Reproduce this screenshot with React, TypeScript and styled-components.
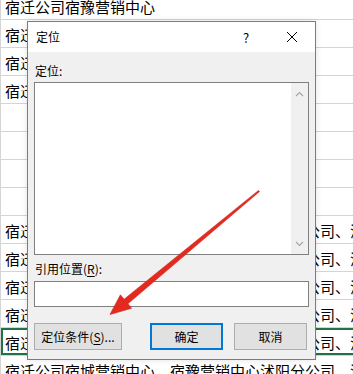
import styled, { createGlobalStyle } from "styled-components";

const GlobalStyle = createGlobalStyle`
    html, body {
        margin: 0;
        padding: 0;
        background: #ffffff;
        overflow: hidden;
    }
    body {
        font-family: "Noto Sans CJK SC", "Noto Sans", sans-serif;
    }
`;

const Page = styled.div`
    position: relative;
    width: 353px;
    height: 374px;
    overflow: hidden;
    background: #ffffff;
`;

const Sheet = styled.div`
    width: 380px;
    margin-top: -8px;
    border-left: 1px solid #d4d4d4;
`;

const Row = styled.div<{ $selected?: boolean }>`
    box-sizing: border-box;
    height: 28px;
    display: flex;
    align-items: flex-end;
    padding: 0 0 2px 4px;
    border-bottom: 1px solid #d4d4d4;
    font-size: 15px;
    line-height: 20px;
    color: #000000;
    white-space: nowrap;
    overflow: hidden;
    box-shadow: ${(props) => (props.$selected ? "inset 0 0 0 2px #217346" : "none")};
`;

const Dialog = styled.div`
    position: absolute;
    left: 27px;
    top: 21px;
    width: 289px;
    box-sizing: border-box;
    border: 1px solid #7c7c7c;
    background: #f0f0f0;
    display: flex;
    flex-direction: column;
    font-size: 12px;
    color: #000000;
    box-shadow: 0 0 6px rgba(0, 0, 0, 0.12);
`;

const TitleBar = styled.div`
    height: 30px;
    display: flex;
    align-items: center;
    background: #ffffff;
    padding-left: 8px;
`;

const Title = styled.div`
    flex: 1;
    line-height: 16px;
`;

const TitleButton = styled.div`
    width: 46px;
    height: 30px;
    display: flex;
    align-items: center;
    justify-content: center;
    font-size: 13px;
`;

const Body = styled.div`
    display: flex;
    flex-direction: column;
    padding: 11px 6px 9px 6px;
`;

const Label = styled.div<{ $gap: number }>`
    line-height: 16px;
    height: 16px;
    margin-bottom: ${(props) => props.$gap}px;
    padding-left: 1px;

    u {
        text-underline-offset: 2px;
    }
`;

const ListBox = styled.div`
    box-sizing: border-box;
    height: 173px;
    margin-bottom: 6px;
    border: 1px solid #7f7f7f;
    background: #ffffff;
    display: flex;
    justify-content: flex-end;
`;

const ScrollTrack = styled.div`
    width: 17px;
    background: #f0f0f0;
    display: flex;
    flex-direction: column;
    justify-content: space-between;
    align-items: center;
    padding: 8px 0 7px;
`;

const Input = styled.div`
    box-sizing: border-box;
    height: 26px;
    margin-bottom: 16px;
    border: 1px solid #7f7f7f;
    background: #ffffff;
`;

const ButtonRow = styled.div`
    display: flex;
    justify-content: space-between;
    padding-right: 2px;
`;

const ButtonGroup = styled.div`
    display: flex;
    gap: 11px;
`;

const Button = styled.div<{ $width: number; $default?: boolean }>`
    box-sizing: border-box;
    width: ${(props) => props.$width}px;
    height: 27px;
    display: flex;
    align-items: center;
    justify-content: center;
    background: #e1e1e1;
    border: ${(props) => (props.$default ? "2px solid #0078d7" : "1px solid #adadad")};
    line-height: 16px;

    u {
        text-underline-offset: 2px;
    }
`;

const Overlay = styled.svg`
    position: absolute;
    left: 0;
    top: 0;
    pointer-events: none;
`;

const shortText = "宿迁公司宿豫营销中心";
const longText = "宿迁公司宿城营销中心、宿豫营销中心沭阳分公司、沭阳分公司";

const rows = [
    shortText, shortText, shortText, shortText,
    "", "", "", "",
    longText, longText, longText, longText, longText, longText,
];

function Chevron({ up }: { up: boolean }) {
    return (
        <svg width="9" height="6" viewBox="0 0 9 6">
            <polyline
                points={up ? "1,5 4.5,1.5 8,5" : "1,1 4.5,4.5 8,1"}
                fill="none"
                stroke="#a6a6a6"
                strokeWidth="1.2"
            />
        </svg>
    );
}

function App() {
    return (
        <>
            <GlobalStyle />
            <Page>
                <Sheet>
                    {rows.map((text, i) => (
                        <Row key={i} $selected={i === 12}>{text}</Row>
                    ))}
                </Sheet>

                <Dialog>
                    <TitleBar>
                        <Title>定位</Title>
                        <TitleButton>?</TitleButton>
                        <TitleButton>
                            <svg width="12" height="12" viewBox="0 0 12 12">
                                <path d="M1 1 L11 11 M11 1 L1 11" stroke="#000" strokeWidth="1" />
                            </svg>
                        </TitleButton>
                    </TitleBar>
                    <Body>
                        <Label $gap={3}>定位:</Label>
                        <ListBox>
                            <ScrollTrack>
                                <Chevron up />
                                <Chevron up={false} />
                            </ScrollTrack>
                        </ListBox>
                        <Label $gap={4}>引用位置(<u>R</u>):</Label>
                        <Input />
                        <ButtonRow>
                            <Button $width={88}>定位条件(<u>S</u>)...</Button>
                            <ButtonGroup>
                                <Button $width={73} $default>确定</Button>
                                <Button $width={73}>取消</Button>
                            </ButtonGroup>
                        </ButtonRow>
                    </Body>
                </Dialog>

                <Overlay width="353" height="374" viewBox="0 0 353 374">
                    <polygon
                        points="259.5,191.6 127.9,303.8 131.6,308.3 110,314.5 120.4,294.8 124.1,299.2 258.5,190.4"
                        fill="#e42a1f"
                        stroke="#d0201a"
                        strokeWidth="0.6"
                        strokeLinejoin="round"
                    />
                </Overlay>
            </Page>
        </>
    );
}

export default App;
